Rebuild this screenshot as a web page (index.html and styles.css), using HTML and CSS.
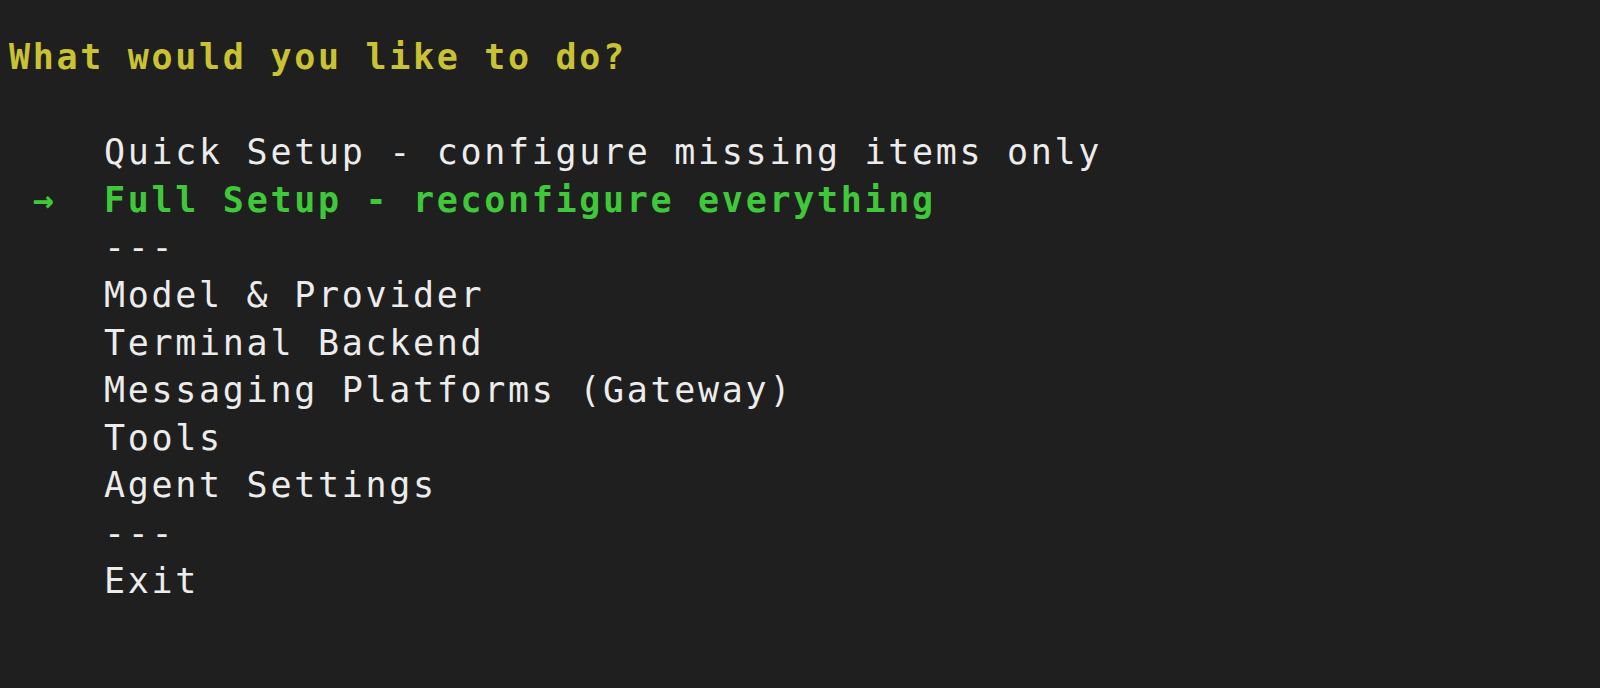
FILE: index.html
```html
<!DOCTYPE html>
<html lang="en">
<head>
<meta charset="utf-8">
<title>Setup</title>
<link rel="stylesheet" href="styles.css">
</head>
<body>
<main class="term">
<div class="line prompt">What would you like to do?</div>
<div class="line"> </div>
<div class="line item">    Quick Setup - configure missing items only</div>
<div class="line item selected"><span class="arrow"> →  </span>Full Setup - reconfigure everything</div>
<div class="line item">    ---</div>
<div class="line item">    Model &amp; Provider</div>
<div class="line item">    Terminal Backend</div>
<div class="line item">    Messaging Platforms (Gateway)</div>
<div class="line item">    Tools</div>
<div class="line item">    Agent Settings</div>
<div class="line item">    ---</div>
<div class="line item">    Exit</div>
</main>
</body>
</html>
```
FILE: styles.css
```css
html, body {
  margin: 0;
  padding: 0;
  background: #1f1f1f;
  height: 100%;
}
.term {
  padding: 34px 0 0 9px;
  font-family: "DejaVu Sans Mono", "Liberation Mono", monospace;
  font-size: 35px;
  letter-spacing: 2.69px;
  line-height: 47.6px;
  color: #ececec;
}
.line {
  white-space: pre;
  height: 47.6px;
}
.prompt {
  color: #c9c234;
  font-weight: bold;
}
.selected {
  color: #3fc83a;
  font-weight: bold;
}
.arrow {
  color: #3fc83a;
}
```
